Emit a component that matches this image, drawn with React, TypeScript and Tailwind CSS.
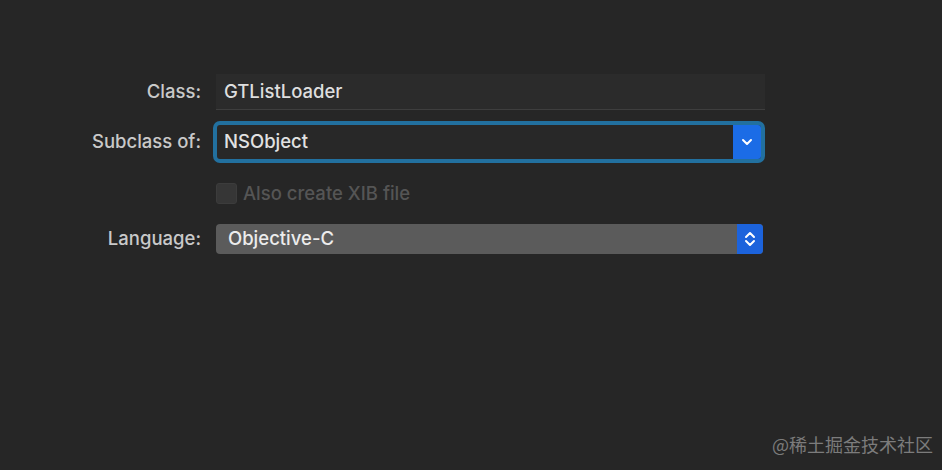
import React from 'react';

function Chevron() {
  return (
    <svg width="12" height="8" viewBox="0 0 12 8" fill="none">
      <path d="M2 2l4 4 4-4" stroke="white" strokeWidth="2" strokeLinecap="round" strokeLinejoin="round" />
    </svg>
  );
}

function UpDown() {
  return (
    <svg width="12" height="18" viewBox="0 0 12 18" fill="none">
      <path d="M2 7l4-4 4 4" stroke="white" strokeWidth="2" strokeLinecap="round" strokeLinejoin="round" />
      <path d="M2 11l4 4 4-4" stroke="white" strokeWidth="2" strokeLinecap="round" strokeLinejoin="round" />
    </svg>
  );
}

export default function App() {
  return (
    <div
      className="relative w-[942px] h-[470px] bg-[#262626] overflow-hidden text-[18.5px] font-medium"
      style={{ fontFamily: 'Inter, "Liberation Sans", Arial, sans-serif' }}
    >
      <div className="grid grid-cols-[201px_549px] gap-x-[15px] pt-[74px] items-center">
        {/* Class */}
        <div className="text-right text-[#c9c9c9]">Class:</div>
        <div className="h-[36px] bg-[#2b2b2b] border-b border-[#3e3e3e] flex items-center pl-[8px] text-[#dedede]">
          GTListLoader
        </div>

        {/* Subclass */}
        <div className="text-right text-[#c9c9c9] mt-[15px]">Subclass of:</div>
        <div className="mt-[15px] h-[34px] w-[544px] ml-[1px] bg-[#282828] rounded-[3px] ring-[4px] ring-[#22709f] flex items-center justify-between">
          <span className="pl-[7px] text-[#e2e2e2]">NSObject</span>
          <div className="h-full w-[28px] bg-[#1b6ce6] rounded-r-[3px] flex items-center justify-center">
            <Chevron />
          </div>
        </div>

        {/* checkbox */}
        <div className="mt-[21px]" />
        <div className="mt-[21px] flex items-center gap-[6px] text-[#555555]">
          <div className="w-[21px] h-[21px] rounded-[3px] bg-[#363636] border border-[#3c3c3c]" />
          <span>Also create XIB file</span>
        </div>

        {/* Language */}
        <div className="text-right text-[#c9c9c9] mt-[16px]">Language:</div>
        <div className="mt-[16px] h-[30px] w-[547px] bg-[#5b5b5b] rounded-[4px] flex items-center justify-between">
          <span className="pl-[12px] text-[#ececec]">Objective-C</span>
          <div className="h-full w-[26px] bg-[#1c63dc] rounded-r-[4px] flex items-center justify-center">
            <UpDown />
          </div>
        </div>
      </div>

      <div
        className="absolute right-[9px] bottom-[12px] text-[18px] font-normal text-[#7c7c7c]"
        style={{ fontFamily: '"Noto Sans CJK SC", sans-serif' }}
      >
        @稀土掘金技术社区
      </div>
    </div>
  );
}
